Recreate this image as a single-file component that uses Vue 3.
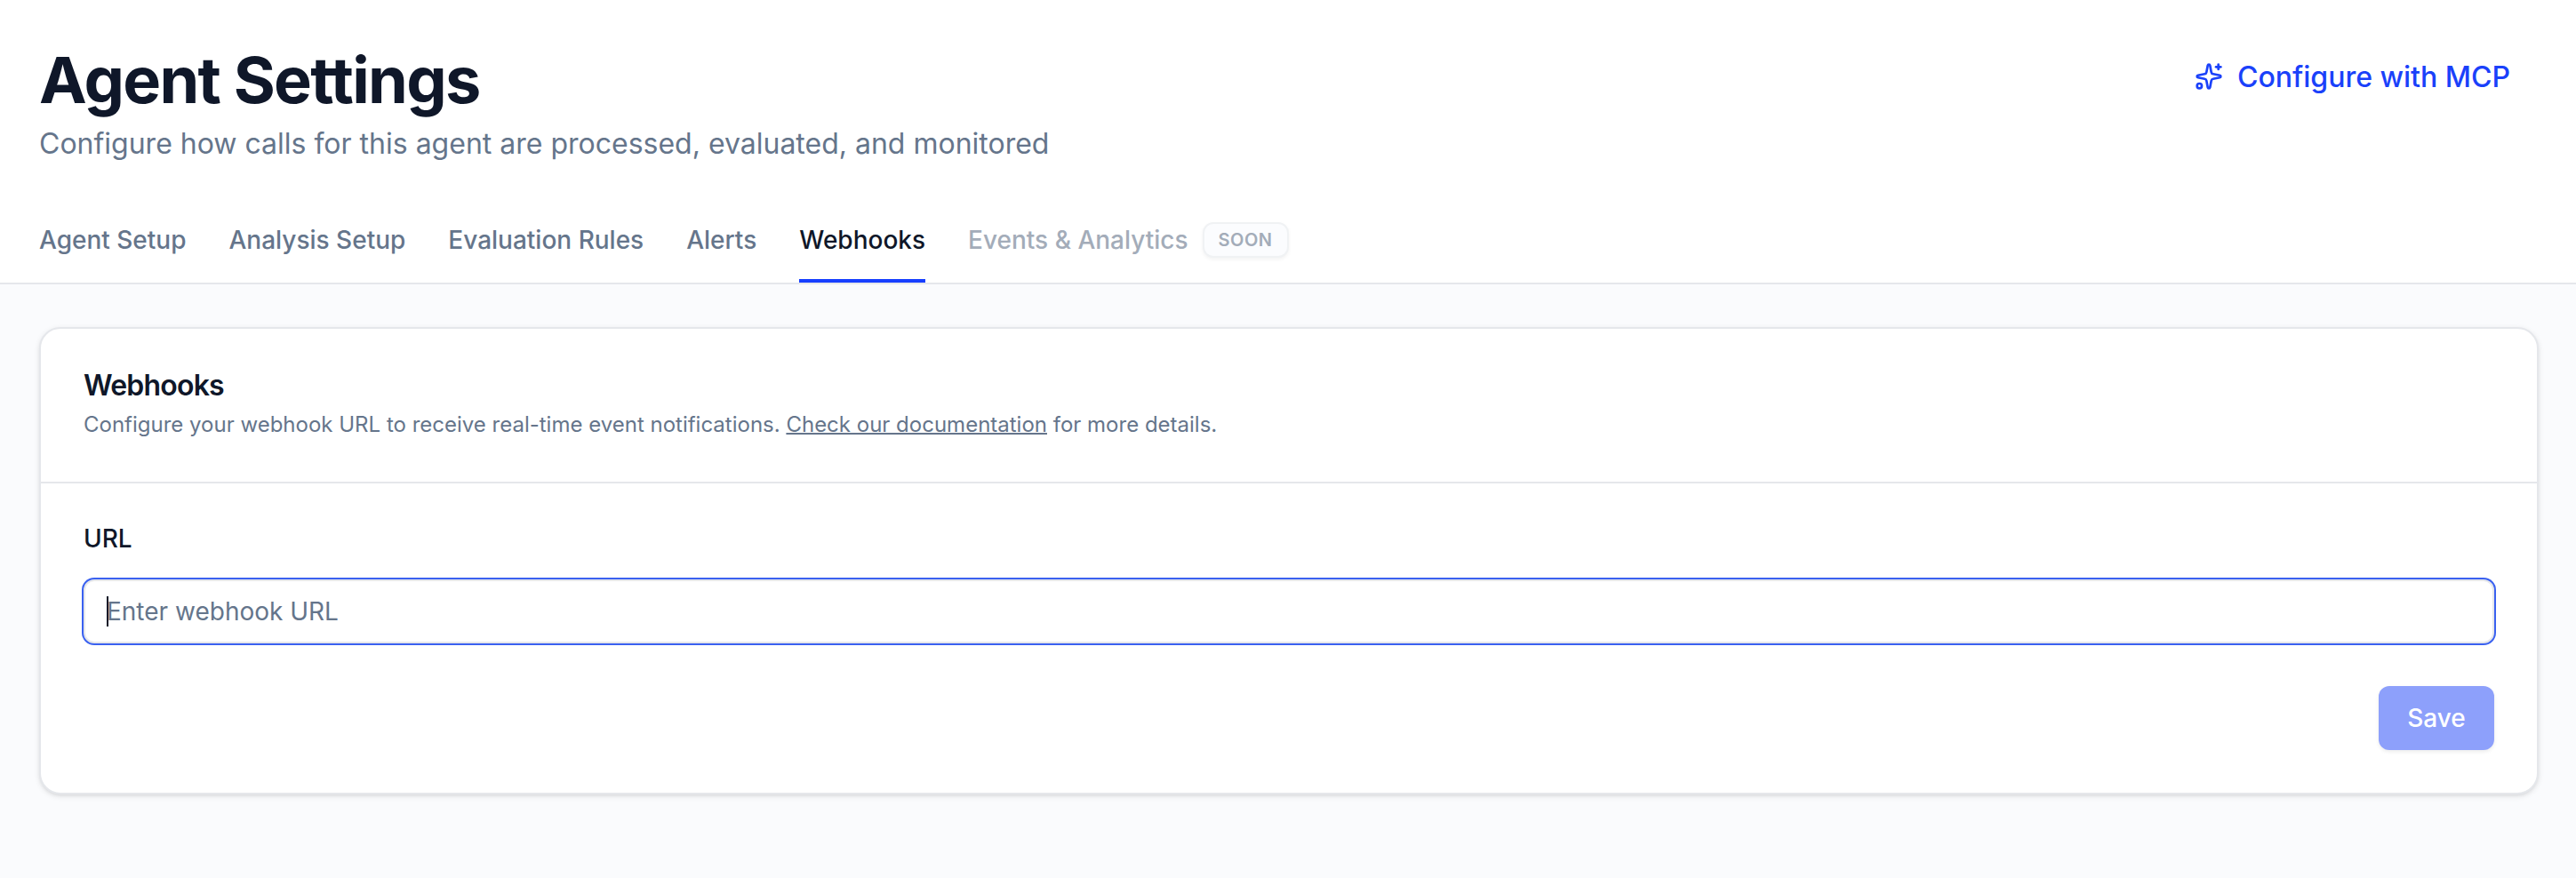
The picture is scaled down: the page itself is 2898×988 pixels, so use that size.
<template>
  <div class="page">
    <!-- Header -->
    <header class="header">
      <div class="header-top">
        <div class="heading">
          <h1>Agent Settings</h1>
          <p>Configure how calls for this agent are processed, evaluated, and monitored</p>
        </div>
        <button type="button" class="mcp-btn">
          <svg class="mcp-icon" viewBox="0 0 24 24" fill="none" stroke="currentColor" stroke-width="2" stroke-linecap="round" stroke-linejoin="round">
            <path d="M11.017 2.814a1 1 0 0 1 1.966 0l1.051 5.558a2 2 0 0 0 1.594 1.594l5.558 1.051a1 1 0 0 1 0 1.966l-5.558 1.051a2 2 0 0 0-1.594 1.594l-1.051 5.558a1 1 0 0 1-1.966 0l-1.051-5.558a2 2 0 0 0-1.594-1.594l-5.558-1.051a1 1 0 0 1 0-1.966l5.558-1.051a2 2 0 0 0 1.594-1.594z" />
            <path d="M20 2v4" />
            <path d="M22 4h-4" />
            <circle cx="4" cy="20" r="2" />
          </svg>
          <span>Configure with MCP</span>
        </button>
      </div>

      <!-- Tabs -->
      <nav class="tabs">
        <button
          v-for="tab in tabs"
          :key="tab.id"
          type="button"
          class="tab"
          :class="{ active: tab.id === activeTab, soon: tab.soon }"
          :disabled="tab.soon"
          @click="activeTab = tab.id"
        >
          <span>{{ tab.label }}</span>
          <span v-if="tab.soon" class="badge">SOON</span>
        </button>
      </nav>
    </header>

    <!-- Webhooks card -->
    <main class="content">
      <section class="card">
        <div class="card-header">
          <h2>Webhooks</h2>
          <p>
            Configure your webhook URL to receive real-time event notifications.
            <a href="#">Check our documentation</a> for more details.
          </p>
        </div>
        <form class="card-body" @submit.prevent="saveWebhook">
          <label for="webhookUrl">URL</label>
          <div class="input-wrap">
            <input
              type="text"
              id="webhookUrl"
              v-model="url"
              placeholder="Enter webhook URL"
              autocomplete="off"
            >
            <span v-if="!url" class="caret"></span>
          </div>
          <div class="actions">
            <button type="submit" class="save-btn" :disabled="!url">Save</button>
          </div>
        </form>
      </section>
    </main>
  </div>
</template>

<script setup>
import { ref } from 'vue'

const tabs = [
  { id: 'agent', label: 'Agent Setup' },
  { id: 'analysis', label: 'Analysis Setup' },
  { id: 'rules', label: 'Evaluation Rules' },
  { id: 'alerts', label: 'Alerts' },
  { id: 'webhooks', label: 'Webhooks' },
  { id: 'events', label: 'Events & Analytics', soon: true }
]

const activeTab = ref('webhooks')
const url = ref('')
const savedUrl = ref('')

const saveWebhook = () => {
  savedUrl.value = url.value.trim()
}
</script>

<style>
body {
  margin: 0;
  background: #fafbfd;
}
</style>

<style scoped>
.page {
  box-sizing: border-box;
  min-height: 988px;
  background: #fafbfd;
  color: #0f1729;
  font-family: Inter, "Liberation Sans", sans-serif;
}

.page * {
  box-sizing: border-box;
}

button,
input {
  font-family: inherit;
}

/* Header */
.header {
  height: 320px;
  padding: 54px 42px 0 44px;
  background: #ffffff;
  border-bottom: 2px solid #e5e7eb;
  display: flex;
  flex-direction: column;
  justify-content: space-between;
}

.header-top {
  display: flex;
  justify-content: space-between;
  align-items: flex-start;
}

.heading h1 {
  margin: 0;
  font-size: 72px;
  line-height: 72px;
  font-weight: 700;
  letter-spacing: -1.68px;
}

.heading p {
  margin: 12px 0 0;
  font-size: 32px;
  line-height: 48px;
  color: #65758b;
}

.mcp-btn {
  display: flex;
  align-items: center;
  gap: 16px;
  height: 64px;
  padding: 0 32px;
  border: none;
  background: none;
  color: #1a41fa;
  font-size: 32px;
  font-weight: 500;
  cursor: pointer;
}

.mcp-icon {
  width: 32px;
  height: 32px;
}

/* Tabs */
.tabs {
  display: flex;
  gap: 48px;
}

.tab {
  display: flex;
  align-items: center;
  gap: 16px;
  height: 92px;
  padding: 0;
  border: none;
  border-bottom: 4px solid transparent;
  background: none;
  color: #65758b;
  font-size: 28px;
  font-weight: 500;
  white-space: nowrap;
  cursor: pointer;
}

.tab.active {
  color: #0f1729;
  border-bottom-color: #173fff;
}

.tab.soon {
  color: #a3acb9;
  cursor: default;
}

.badge {
  display: flex;
  align-items: center;
  height: 40px;
  padding: 0 16px;
  border: 2px solid #f0f2f4;
  border-radius: 12px;
  background: #fbfcfe;
  box-shadow: 0 2px 4px rgba(0, 0, 0, 0.05);
  font-size: 20px;
  font-weight: 600;
  letter-spacing: 0.025em;
}

/* Card */
.content {
  padding: 48px 42px 0 44px;
}

.card {
  border: 2px solid #e5e7eb;
  border-radius: 24px;
  background: #ffffff;
  box-shadow: 0 2px 6px rgba(0, 0, 0, 0.1), 0 2px 4px -2px rgba(0, 0, 0, 0.1);
}

.card-header {
  height: 174px;
  padding: 48px;
  border-bottom: 2px solid #e5e7eb;
}

.card-header h2 {
  margin: 0;
  font-size: 32px;
  line-height: 32px;
  font-weight: 600;
  letter-spacing: -0.025em;
}

.card-header p {
  margin: 12px 0 0;
  font-size: 24px;
  line-height: 32px;
  color: #65758b;
}

.card-header a {
  color: inherit;
  text-decoration: underline;
  text-decoration-thickness: 2px;
  text-decoration-skip-ink: none;
}

.card-body {
  display: flex;
  flex-direction: column;
  padding: 48px;
}

.card-body label {
  font-size: 28px;
  line-height: 28px;
  font-weight: 500;
}

.input-wrap {
  position: relative;
  margin-top: 32px;
}

.input-wrap input {
  display: block;
  width: 100%;
  height: 72px;
  padding: 0 24px;
  border: 2px solid #e5e7eb;
  border-radius: 12px;
  outline: none;
  background: #ffffff;
  box-shadow: 0 0 0 2px #3a61f0;
  color: #0f1729;
  font-size: 28px;
}

.input-wrap input::placeholder {
  color: #65758b;
  opacity: 1;
}

/* text cursor over the start of the field */
.caret {
  position: absolute;
  left: 26px;
  top: 19px;
  width: 2px;
  height: 34px;
  background: #0f1729;
}

.actions {
  display: flex;
  justify-content: flex-end;
  margin-top: 48px;
}

.save-btn {
  width: 130px;
  height: 72px;
  padding: 0;
  border: none;
  border-radius: 12px;
  background: #173fff;
  box-shadow: 0 2px 4px rgba(0, 0, 0, 0.08);
  color: #ffffff;
  font-size: 28px;
  font-weight: 500;
}

.save-btn:disabled {
  background: #8da0fb;
}
</style>
